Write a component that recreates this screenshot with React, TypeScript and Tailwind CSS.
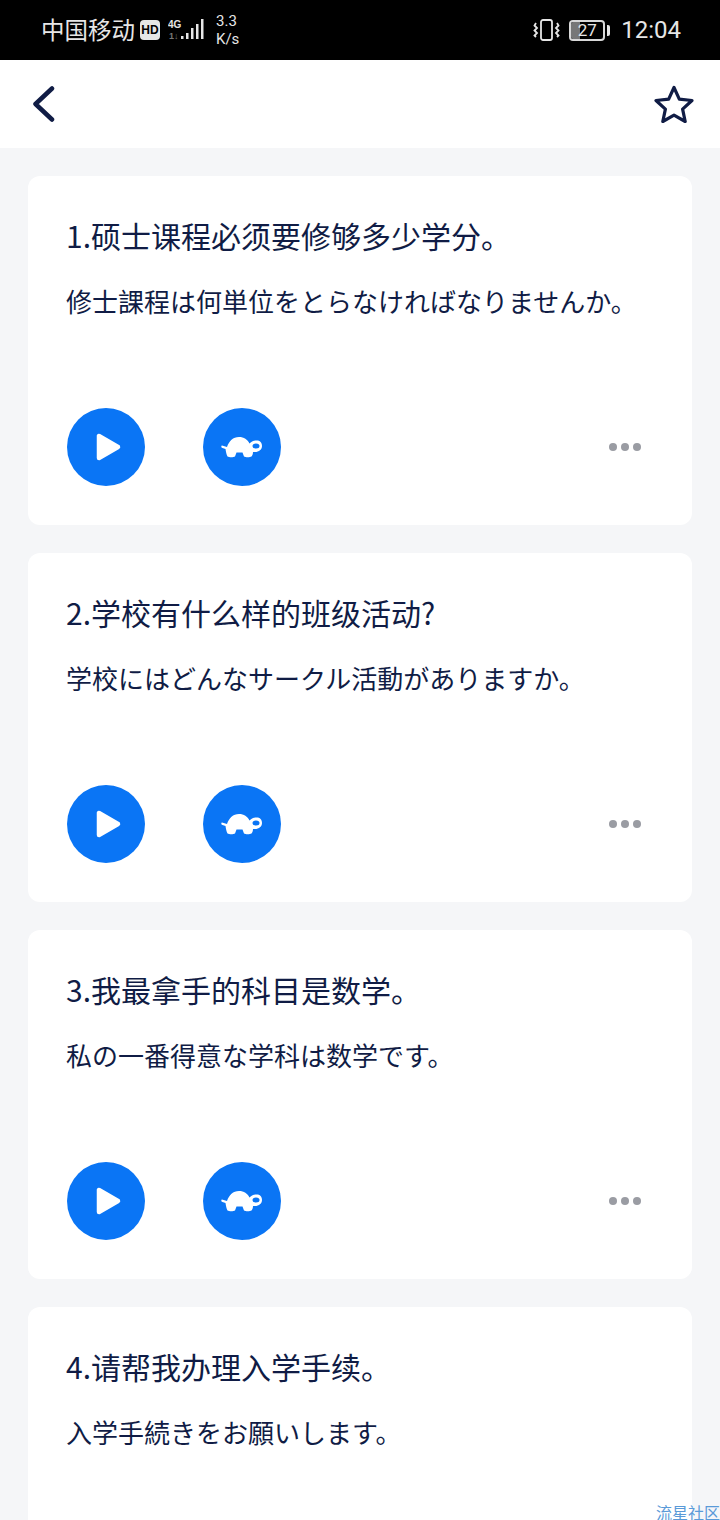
const CARDS = [
  { title: "1.硕士课程必须要修够多少学分。", sub: "修士課程は何単位をとらなければなりませんか。" },
  { title: "2.学校有什么样的班级活动?", sub: "学校にはどんなサークル活動がありますか。" },
  { title: "3.我最拿手的科目是数学。", sub: "私の一番得意な学科は数学です。" },
  { title: "4.请帮我办理入学手续。", sub: "入学手続きをお願いします。" },
];

const CJK = {
  fontFamily: '"Noto Sans CJK SC", "Noto Sans", sans-serif',
};

function StatusBar() {
  return (
    <div className="flex h-[60px] shrink-0 items-center justify-between bg-black pl-[41px] pr-[39px] text-[#e6e6e6]">
      <div className="flex items-center">
        <span className="text-[23.500px] leading-none" style={CJK}>
          中国移动
        </span>
        <span className="ml-[5px] flex h-[20px] w-[20px] items-center justify-center rounded-[4px] bg-[#e6e6e6] font-['Liberation_Sans',sans-serif] text-[12px] font-bold leading-none text-black">
          HD
        </span>
        <svg width="36" height="24" viewBox="0 0 36 24" className="ml-[8px]">
          <text x="0" y="10" fontSize="10" fontWeight="700" fill="#e6e6e6" fontFamily="Liberation Sans">
            4G
          </text>
          <text x="1" y="21" fontSize="9" fontWeight="700" fill="#777" fontFamily="Liberation Sans">
            1↓
          </text>
          <rect x="13" y="18" width="2.500" height="3" fill="#e6e6e6" />
          <rect x="18" y="15" width="2.500" height="6" fill="#e6e6e6" />
          <rect x="23" y="10" width="2.500" height="11" fill="#e6e6e6" />
          <rect x="28" y="6" width="2.500" height="15" fill="#e6e6e6" />
          <rect x="33" y="1" width="2.500" height="20" fill="#e6e6e6" />
        </svg>
        <div className="ml-[12px] flex flex-col font-['Roboto',sans-serif] text-[15px] leading-[18px]">
          <span>3.3</span>
          <span>K/s</span>
        </div>
      </div>
      <div className="flex items-center">
        <svg width="28" height="22" viewBox="0 0 28 22" fill="none" stroke="#e6e6e6" strokeWidth="1.800">
          <rect x="8" y="1" width="11" height="20" rx="2" />
          <path d="M3 4l-1.500 2.500L4 9 1.500 11.500 4 14l-2.500 2.500L3 18" />
          <path d="M24 4l1.500 2.500L23 9l2.500 2.500L23 14l2.500 2.500L24 18" />
        </svg>
        <div className="ml-[8px] flex items-center">
          <div className="relative flex h-[21px] w-[36px] items-center justify-center overflow-hidden rounded-[4px] border-2 border-[#d8d8d8] font-['Roboto',sans-serif] text-[17px] leading-none">
            <div className="absolute inset-y-0 left-0 w-[9px] bg-[#777]" />
            <span className="relative">27</span>
          </div>
          <div className="ml-[2px] h-[11px] w-[3px] rounded-r-[2px] bg-[#e6e6e6]" />
        </div>
        <span className="ml-[11px] font-['Roboto',sans-serif] text-[24px] leading-none">12:04</span>
      </div>
    </div>
  );
}

function TurtleIcon() {
  return (
    <svg width="42" height="22" viewBox="0 0 42 22">
      <path
        d="M1 9.500l5 1.500C8 5 12 1 18 1c5 0 8.500 2.500 10.500 6.500C30 6 32 4.500 35.500 4.500c3.500 0 5.500 2 5.500 5.500 0 3.500-3 6-7 6h-2c0 1.500-.5 3.500-1.500 4.500-1.500 1-6 1-7.500 0l-1.500-4h-6l-1.500 4c-1.500 1-6 1-7.500 0-1-1.500-1.500-4.500-2-7.500L1.500 12C0 11.500 0 9.500 1 9.500z"
        fill="#fff"
      />
      <ellipse cx="35" cy="10" rx="3.500" ry="2.500" fill="#0a75f5" />
    </svg>
  );
}

function Card({ title, sub }: { title: string; sub: string }) {
  return (
    <div className="h-[349px] shrink-0 rounded-[12px] bg-white pl-[39px] pr-[51px] pt-[39px]" style={CJK}>
      <div className="-ml-[1px] text-[30px] leading-[40px] text-[#101c45]">{title}</div>
      <div className="-ml-[1px] mt-[29px] text-[26px] leading-[34px] text-[#101c45]">{sub}</div>
      <div className="mt-[90px] flex items-center">
        <div className="flex h-[78px] w-[78px] items-center justify-center rounded-full bg-[#0a75f5]">
          <svg width="28" height="32" viewBox="0 0 28 32" className="ml-[3px]">
            <path d="M5 5v22l19-11z" fill="#fff" stroke="#fff" strokeWidth="4.500" strokeLinejoin="round" />
          </svg>
        </div>
        <div className="ml-[58px] flex h-[78px] w-[78px] items-center justify-center rounded-full bg-[#0a75f5]">
          <TurtleIcon />
        </div>
        <div className="ml-auto flex gap-[4px]">
          <span className="h-[8px] w-[8px] rounded-full bg-[#9a9ca3]" />
          <span className="h-[8px] w-[8px] rounded-full bg-[#9a9ca3]" />
          <span className="h-[8px] w-[8px] rounded-full bg-[#9a9ca3]" />
        </div>
      </div>
    </div>
  );
}

export default function App() {
  return (
    <div className="relative flex h-[1520px] w-[720px] flex-col overflow-hidden bg-[#f5f6f8]">
      <StatusBar />
      <div className="flex h-[88px] shrink-0 items-center justify-between bg-white pl-[31px] pr-[26px]">
        <svg width="26" height="36" viewBox="0 0 26 36" fill="none" stroke="#101c45" strokeWidth="4.500" strokeLinecap="round" strokeLinejoin="round">
          <path d="M21 2.500L4.500 18 21 33.500" />
        </svg>
        <svg width="40" height="38" viewBox="0 0 40 38" fill="none" stroke="#101c45" strokeWidth="3.200" strokeLinejoin="round">
          <path d="M20 2.500l5.300 11.600 12.700 1.400-9.400 8.600 2.600 12.400L20 30.200 8.800 36.500l2.600-12.400L2 15.500l12.700-1.400z" />
        </svg>
      </div>
      <div className="flex shrink-0 flex-col gap-[28px] px-[28px] pt-[28px]">
        {CARDS.map((card) => (
          <Card key={card.title} title={card.title} sub={card.sub} />
        ))}
      </div>
      <div className="absolute bottom-0 right-0 text-[16px] leading-[16px] text-[#5a9ad8]" style={CJK}>
        流星社区
      </div>
    </div>
  );
}
